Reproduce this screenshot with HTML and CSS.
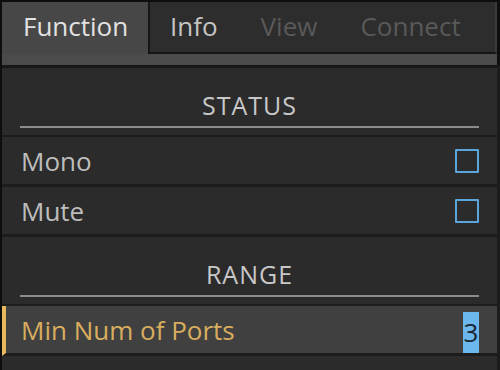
FILE: index.html
```html
<!DOCTYPE html>
<html>
  <head>
    <meta charset="UTF-8">
    <title>Inspector</title>
    <link rel="stylesheet" href="styles.css">
  </head>
  <body>
    <div class="inspector">
      <div class="tabs">
        <div class="tab active">Function</div>
        <div class="tab-rest">
          <div class="tab">Info</div>
          <div class="tab disabled">View</div>
          <div class="tab disabled">Connect</div>
        </div>
      </div>
      <div class="tab-strip"></div>

      <div class="content">
        <div class="section-head">
          <span>STATUS</span>
        </div>
        <div class="row">
          <span class="label">Mono</span>
          <span class="checkbox"></span>
        </div>
        <div class="row">
          <span class="label">Mute</span>
          <span class="checkbox"></span>
        </div>

        <div class="section-head">
          <span>RANGE</span>
        </div>
        <div class="row selected">
          <span class="label">Min Num of Ports</span>
          <span class="value">3</span>
        </div>
      </div>
    </div>
  </body>
</html>
```

FILE: styles.css
```css
* {
  margin: 0;
  padding: 0;
  box-sizing: border-box;
}

body {
  background: #0e0e0e;
  font-family: 'Open Sans', 'Noto Sans', sans-serif;
  width: 500px;
  height: 370px;
  overflow: hidden;
}

.inspector {
  width: 500px;
  height: 370px;
  padding: 2px 0 0 2px;
  background: #0e0e0e;
  display: flex;
  flex-direction: column;
}

.tabs {
  display: flex;
  height: 52px;
}

.tab {
  font-size: 26px;
  color: #c4c4c4;
  line-height: 48px;
}

.tab.active {
  width: 146px;
  background: #474747;
  color: #e2e2e2;
  padding-left: 21px;
  line-height: 48px;
}

.tab-rest {
  flex: 1;
  display: flex;
  background: #2d2d2d;
  border-left: 2px solid #161616;
  border-bottom: 2px solid #161616;
  border-right: 2px solid #3a3a3a;
  margin-right: 3px;
  padding-left: 20px;
  gap: 43px;
}

.tab.disabled {
  color: #595959;
}

.tab-strip {
  height: 11px;
  background: #4b4b4b;
  margin-right: 3px;
}

.content {
  flex: 1;
  background: #2b2b2b;
  border-top: 3px solid #181818;
  border-right: 3px solid #1c1c1c;
  display: flex;
  flex-direction: column;
}

.section-head {
  height: 69px;
  flex-shrink: 0;
  padding: 0 18px;
  display: flex;
  align-items: flex-end;
  border-bottom: 2px solid #1c1c1c;
}

.section-head span {
  flex: 1;
  text-align: center;
  font-size: 25px;
  color: #c8c8c8;
  letter-spacing: 1px;
  line-height: 30px;
  padding-bottom: 6px;
  border-bottom: 2px solid #8c8c8c;
  margin-bottom: 7px;
}

.row {
  height: 50px;
  flex-shrink: 0;
  display: flex;
  align-items: center;
  justify-content: space-between;
  padding: 0 18px 0 19px;
  border-bottom: 3px solid #1c1c1c;
}

.label {
  font-size: 26px;
  color: #bdbdbd;
}

.checkbox {
  width: 24px;
  height: 24px;
  border: 2px solid #5aa6dc;
  border-radius: 1px;
}

.row.selected {
  background: #404040;
  border-left: 4px solid #e8b85c;
  padding-left: 15px;
  align-items: stretch;
}

.row.selected .label {
  color: #d8ae5e;
  align-self: center;
}

.value {
  background: #6cb8ee;
  color: #1a2630;
  font-size: 26px;
  width: 16px;
  text-align: center;
  margin-top: 6px;
  line-height: 40px;
  overflow: hidden;
}
```
